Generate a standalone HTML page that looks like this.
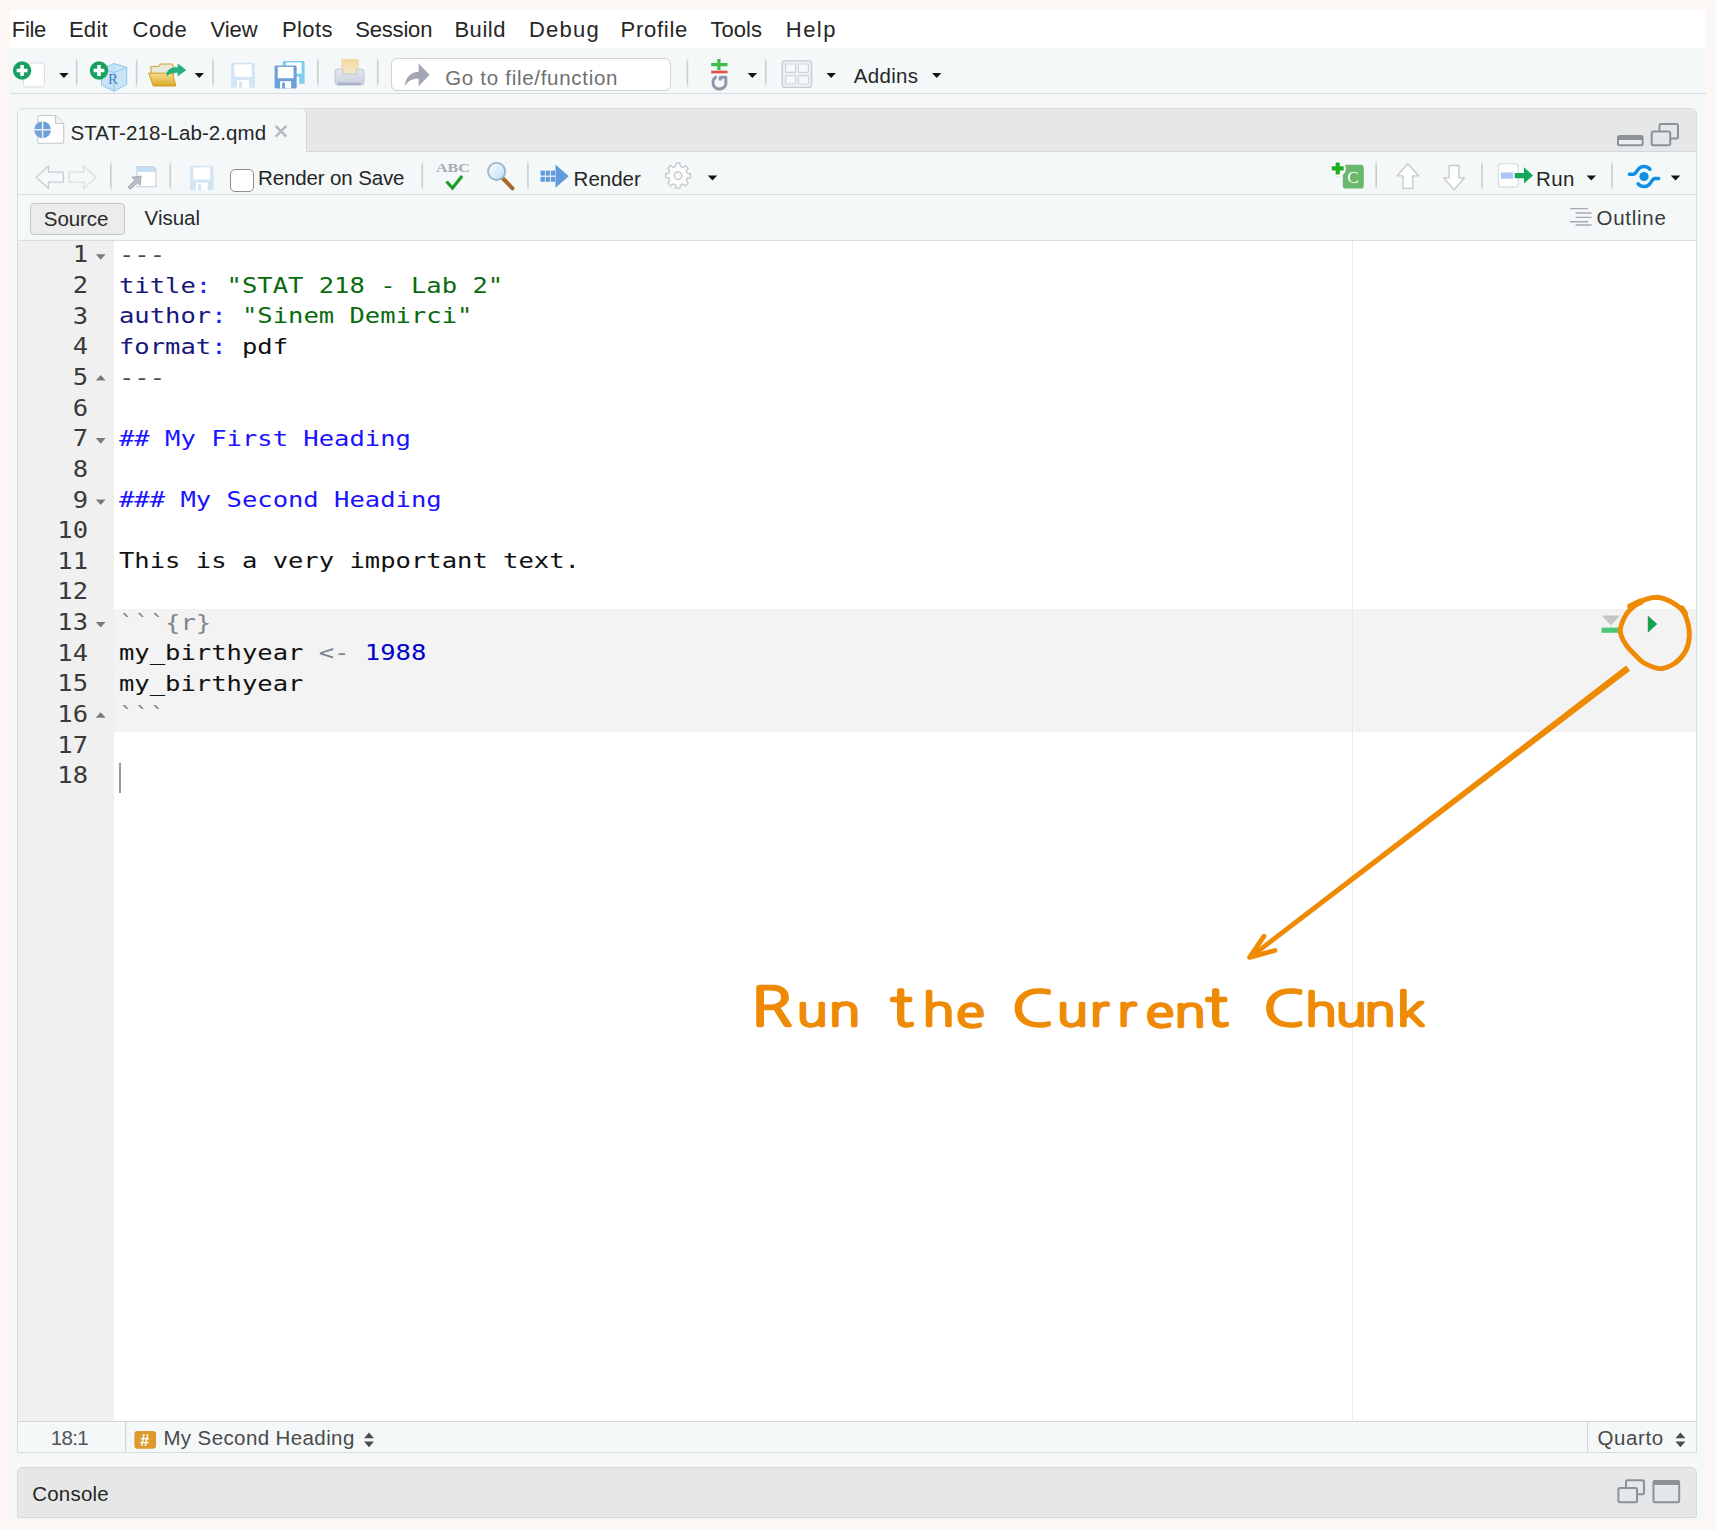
<!DOCTYPE html>
<html lang="en"><head><meta charset="utf-8"><title>RStudio - Run the Current Chunk</title>
<style>
html,body{margin:0;padding:0}
body{width:1716px;height:1530px;background:#fcf7f4;overflow:hidden;position:relative;font-family:"Liberation Sans",sans-serif}
#app{position:absolute;left:10px;top:10px;width:1696px;height:1511px;background:#f5f7f9;overflow:hidden}
#app *{box-sizing:border-box}
#app>*,.panel>*,.editor>*{position:absolute}
.menubar{left:0;top:0;width:1696px;height:38px;background:#fff}
.toolbar{left:0;top:38px;width:1696px;height:46px;background:#f4f8f9;border-bottom:1.5px solid #d8dcdf}
.searchbox{left:381px;top:48px;width:280px;height:33px;background:#fff;border:1px solid #cfd3d6;border-radius:6px}
.panel{left:7px;top:98px;width:1680px;height:1345px;background:#f4f8f9;border:1px solid #d7dbde;border-radius:6px 6px 0 0;overflow:hidden}
.tabstrip{left:0;top:0;width:1680px;height:43px;background:#e6e7e8;border-bottom:1px solid #d3d7da}
.tab{left:0;top:0;width:289px;height:44px;background:#f4f8f9;border-right:1px solid #d3d7da;border-radius:0 5px 0 0}
.edtb{left:0;top:43px;width:1680px;height:43px;background:#f4f8f9;border-bottom:1px solid #d9dde0}
.modebar{left:0;top:86px;width:1680px;height:46px;background:#f4f8f9;border-bottom:1px solid #d9dde0}
.srcbtn{left:12px;top:94px;width:95px;height:32px;background:#ececec;border:1px solid #c4c6c8;border-radius:4px}
.editor{left:0;top:132px;width:1680px;height:1180px;background:#fff;overflow:hidden}
.gutter{left:0;top:0;width:96px;height:1180px;background:#f0f0f0}
.chunkbg{left:96px;top:368.2px;width:1584px;height:122.6px;background:#f3f3f3}
.margin{left:1334.3px;top:0;width:1.2px;height:1180px;background:#ebebeb}
.cursor{left:101px;top:522px;width:1.6px;height:30px;background:#9a9a9a}
.status{left:0;top:1312px;width:1680px;height:32px;background:#f4f8f9;border-top:1px solid #d3d7da}
.console{left:7px;top:1457px;width:1680px;height:50.5px;background:#e6e7e8;border:1px solid #d5d9dc;border-radius:6px 6px 2px 2px}
.chk{left:219.5px;top:158.5px;width:24px;height:23.5px;background:#fff;border:1.5px solid #8c8c8c;border-radius:5px}
#code{left:0;top:0;width:1696px;height:1510px;font-family:"DejaVu Sans Mono","Liberation Mono",monospace;font-size:22px;line-height:30.65px;color:#111;white-space:pre}
#code>div{position:absolute;margin-top:-11.5px;height:30.65px}
#code>div.ln{margin-top:-12.1px}
#code .cl{left:109.4px;transform:scaleX(1.16);transform-origin:0 0}
#code .ln{left:8px;width:70px;text-align:right;color:#3a3a3a;font-size:23.5px;transform:scaleX(1.086);transform-origin:100% 0}
.tag{color:#17177a}.col{color:#1a1aff}.str{color:#0a6a0f}.hd{color:#1b12ff}.num{color:#0000cd}.op{color:#7a8694}.ck{color:#7d8590}.mk{color:#4a4a4a}
.t{position:absolute;line-height:0;white-space:pre;margin-left:-10px;margin-top:-10px}
#ov{position:absolute;left:0;top:0;width:1716px;height:1530px;pointer-events:none}

</style></head>
<body>
<div id="app">
<div class="menubar"></div>
<div class="toolbar"></div>
<div class="searchbox"></div>
<div class="panel">
  <div class="tabstrip"></div>
  <div class="tab"></div>
  <div class="edtb"></div>
  <div class="modebar"></div>
  <div class="srcbtn"></div>
  <div class="editor">
    <div class="gutter"></div>
    <div class="chunkbg"></div>
    <div class="margin"></div>
    <div class="cursor"></div>
  </div>
  <div class="status"></div>
</div>
<div class="console"></div>
<div class="chk"></div>
<div id="code">
<div class="ln" style="top:241.40px">1</div>
<div class="cl" style="top:241.40px"><span class="mk">---</span></div>
<div class="ln" style="top:272.05px">2</div>
<div class="cl" style="top:272.05px"><span class="tag">title</span><span class="col">:</span> <span class="str">"STAT 218 - Lab 2"</span></div>
<div class="ln" style="top:302.70px">3</div>
<div class="cl" style="top:302.70px"><span class="tag">author</span><span class="col">:</span> <span class="str">"Sinem Demirci"</span></div>
<div class="ln" style="top:333.35px">4</div>
<div class="cl" style="top:333.35px"><span class="tag">format</span><span class="col">:</span> pdf</div>
<div class="ln" style="top:364.00px">5</div>
<div class="cl" style="top:364.00px"><span class="mk">---</span></div>
<div class="ln" style="top:394.65px">6</div>
<div class="ln" style="top:425.30px">7</div>
<div class="cl" style="top:425.30px"><span class="hd">## My First Heading</span></div>
<div class="ln" style="top:455.95px">8</div>
<div class="ln" style="top:486.60px">9</div>
<div class="cl" style="top:486.60px"><span class="hd">### My Second Heading</span></div>
<div class="ln" style="top:517.25px">10</div>
<div class="ln" style="top:547.90px">11</div>
<div class="cl" style="top:547.90px">This is a very important text.</div>
<div class="ln" style="top:578.55px">12</div>
<div class="ln" style="top:609.20px">13</div>
<div class="cl" style="top:609.20px"><span class="ck">```{r}</span></div>
<div class="ln" style="top:639.85px">14</div>
<div class="cl" style="top:639.85px">my_birthyear <span class="op">&lt;-</span> <span class="num">1988</span></div>
<div class="ln" style="top:670.50px">15</div>
<div class="cl" style="top:670.50px">my_birthyear</div>
<div class="ln" style="top:701.15px">16</div>
<div class="cl" style="top:701.15px"><span class="ck">```</span></div>
<div class="ln" style="top:731.80px">17</div>
<div class="ln" style="top:762.45px">18</div>
</div>
<span class="t" style="left:11.8px;top:30.4px;font-size:22px;color:#262626;letter-spacing:-0.300px;">File</span>
<span class="t" style="left:68.9px;top:30.4px;font-size:22px;color:#262626;letter-spacing:0.300px;">Edit</span>
<span class="t" style="left:132.6px;top:30.4px;font-size:22px;color:#262626;letter-spacing:0.533px;">Code</span>
<span class="t" style="left:210.5px;top:30.4px;font-size:22px;color:#262626;letter-spacing:-0.033px;">View</span>
<span class="t" style="left:282.0px;top:30.4px;font-size:22px;color:#262626;letter-spacing:0.400px;">Plots</span>
<span class="t" style="left:355.3px;top:30.4px;font-size:22px;color:#262626;letter-spacing:-0.200px;">Session</span>
<span class="t" style="left:454.4px;top:30.4px;font-size:22px;color:#262626;letter-spacing:0.550px;">Build</span>
<span class="t" style="left:528.9px;top:30.4px;font-size:22px;color:#262626;letter-spacing:1.275px;">Debug</span>
<span class="t" style="left:620.6px;top:30.4px;font-size:22px;color:#262626;letter-spacing:0.717px;">Profile</span>
<span class="t" style="left:710.6px;top:30.4px;font-size:22px;color:#262626;letter-spacing:0.000px;">Tools</span>
<span class="t" style="left:785.8px;top:30.4px;font-size:22px;color:#262626;letter-spacing:1.467px;">Help</span>
<span class="t" style="left:445.2px;top:78.1px;font-size:20.5px;color:#6f6f6f;letter-spacing:0.706px;">Go to file/function</span>
<span class="t" style="left:853.8px;top:75.9px;font-size:20.5px;color:#262626;letter-spacing:0.320px;">Addins</span>
<span class="t" style="left:70.5px;top:132.7px;font-size:20.5px;color:#262626;letter-spacing:0.094px;">STAT-218-Lab-2.qmd</span>
<span class="t" style="left:258.1px;top:177.5px;font-size:20.5px;color:#262626;letter-spacing:-0.138px;">Render on Save</span>
<span class="t" style="left:573.6px;top:179.2px;font-size:20.5px;color:#262626;letter-spacing:-0.020px;">Render</span>
<span class="t" style="left:1536.1px;top:178.9px;font-size:20.5px;color:#262626;letter-spacing:0.350px;">Run</span>
<span class="t" style="left:43.8px;top:218.9px;font-size:20.5px;color:#2a2a2a;letter-spacing:-0.080px;">Source</span>
<span class="t" style="left:144.6px;top:217.9px;font-size:20.5px;color:#2a2a2a;letter-spacing:-0.020px;">Visual</span>
<span class="t" style="left:1596.5px;top:217.5px;font-size:20.5px;color:#3a3a3a;letter-spacing:0.733px;">Outline</span>
<span class="t" style="left:50.8px;top:1438.2px;font-size:20.5px;color:#555;letter-spacing:-0.667px;">18:1</span>
<span class="t" style="left:163.4px;top:1438.2px;font-size:20.5px;color:#4a4a4a;letter-spacing:0.394px;">My Second Heading</span>
<span class="t" style="left:1597.4px;top:1438.2px;font-size:20.5px;color:#4a4a4a;letter-spacing:0.620px;">Quarto</span>
<span class="t" style="left:32.3px;top:1493.6px;font-size:20.5px;color:#262626;letter-spacing:0.183px;">Console</span>
</div>
<svg id="ov" width="1716" height="1530" viewBox="0 0 1716 1530">
<defs>
  <linearGradient id="gFold" x1="0" y1="0" x2="0" y2="1"><stop offset="0" stop-color="#f8e08e"/><stop offset="1" stop-color="#dba724"/></linearGradient>
  <linearGradient id="gPaper" x1="0" y1="0" x2="0" y2="1"><stop offset="0" stop-color="#f1d9a4"/><stop offset="1" stop-color="#f7e9c6"/></linearGradient>
  <linearGradient id="gPrn" x1="0" y1="0" x2="0" y2="1"><stop offset="0" stop-color="#e3e7ef"/><stop offset="1" stop-color="#c9d0dd"/></linearGradient>
  <linearGradient id="gLens" x1="0" y1="0" x2="1" y2="1"><stop offset="0" stop-color="#ffffff"/><stop offset="1" stop-color="#b9dcf5"/></linearGradient>
  <g id="dd"><path d="M0 0h9.4l-4.7 5z" fill="#151515"/></g>
  <g id="plusc"><circle r="9.2" fill="#17a05e"/><path d="M-5.4 0h10.8M0 -5.4v10.8" stroke="#fff" stroke-width="3.6"/></g>
  <linearGradient id="gSep" x1="0" y1="0" x2="0" y2="1"><stop offset="0" stop-color="#c9cdd0" stop-opacity="0"/><stop offset=".18" stop-color="#c9cdd0"/><stop offset=".82" stop-color="#c9cdd0"/><stop offset="1" stop-color="#c9cdd0" stop-opacity="0"/></linearGradient>
  <g id="sep"><rect x="-0.800" y="-1" width="1.600" height="31" fill="url(#gSep)"/></g>
  <g id="floppy"><path d="M1.5 0h21a1.5 1.5 0 0 1 1.5 1.5v22a1.5 1.5 0 0 1-1.5 1.5h-21a1.5 1.5 0 0 1-1.5-1.5v-22a1.5 1.5 0 0 1 1.5-1.5z"/><rect x="3.4" y="1.6" width="17.2" height="12.4" fill="#fff"/><rect x="6" y="17.2" width="12" height="7.8" fill="#fff"/><rect x="8.2" y="18.6" width="3" height="6.4"/></g>
</defs>

<!-- ===== main toolbar ===== -->
<g id="ic-newfile">
  <rect x="23.6" y="63" width="20.8" height="24" rx="1.5" fill="#fff" stroke="#d5dce6" stroke-width="1"/>
  <use href="#plusc" x="22.1" y="70.5"/>
</g>
<use href="#dd" x="59.2" y="72.9"/>
<use href="#sep" x="76.6" y="58"/>
<g id="ic-newproj">
  <path d="M101.500 69.500l12.500-6 12.700 3.800v17.200l-12.700 6.700-12.500-6z" fill="#c9e5f5" stroke="#8fc8e8" stroke-width="1"/>
  <path d="M114 72.500v18.700M101.500 69.500l12.500 3 12.700-5.200" fill="none" stroke="#8fc8e8" stroke-width="1" opacity=".9"/>
  <path d="M114 63.500v9" fill="none" stroke="#a9d5ee" stroke-width="1" opacity=".7"/>
  <text x="108" y="83.500" font-family="Liberation Serif, serif" font-size="15" fill="#4a7fcc">R</text>
  <use href="#plusc" x="99" y="70.500"/>
</g>
<use href="#sep" x="136.600" y="58"/>
<g id="ic-open">
  <path d="M151 66.500h7.500l2-2.500h11.500l1.500 2.500v8h-22.500z" fill="#e9e6dc" stroke="#d2a82d" stroke-width="1.2"/>
  <path d="M148.700 73.200h23.800l3.400 12.800h-22.700z" fill="url(#gFold)" stroke="#cf9d1d" stroke-width="1"/>
  <path d="M166.500 73c2.200-4.600 6-6 11.200-5.800v-3.800l8.600 6.600-8.600 6.600v-3.800c-4.600-.4-7.800.4-11.200 3.800z" fill="#21b07f"/>
</g>
<use href="#dd" x="194.600" y="72.900"/>
<use href="#sep" x="213" y="58"/>
<use href="#floppy" x="231" y="62.800" fill="#d3e5f4"/>
<use href="#floppy" x="0" y="0" transform="translate(282.800 61) scale(.91)" fill="#7ccdf0"/>
<use href="#floppy" x="0" y="0" transform="translate(274.600 65.400) scale(.92)" fill="#6d9fd8"/>
<use href="#sep" x="317.800" y="58"/>
<g id="ic-print">
  <rect x="341.600" y="59.200" width="16.600" height="14" fill="url(#gPaper)" stroke="#ecd7a8" stroke-width=".6"/>
  <path d="M338 69h5v5h13.500v-5h4.500a3 3 0 0 1 3 3v10a3 3 0 0 1-3 3h-23a3 3 0 0 1-3-3v-10a3 3 0 0 1 3-3z" fill="url(#gPrn)" stroke="#b7bfd0" stroke-width=".8"/>
  <rect x="338" y="82.600" width="23" height="2.600" fill="#a9b2c6"/>
</g>
<use href="#sep" x="377.700" y="58"/>
<path id="ic-goto" d="M404.500 86.500c1-9.500 6.500-14.500 14.200-14.800v-8.200l10.800 11.300-10.800 11.400v-7.400c-6.300-.3-10.600 2-14.200 7.700z" fill="#a2a6b6"/>
<use href="#sep" x="687.400" y="58"/>
<g id="ic-git">
  <path d="M711.200 64.600h16.300M718.900 59v11" stroke="#3dbb4c" stroke-width="3.300" fill="none"/>
  <path d="M711.200 72h16.300" stroke="#de5148" stroke-width="2.700"/>
  <path d="M716.600 76.700A6.500 6.500 0 1 0 725.800 81.200V77.300H720.300V80.600" fill="none" stroke="#8b9aad" stroke-width="3.100" stroke-linejoin="round"/>
</g>
<use href="#dd" x="747.700" y="72.900"/>
<use href="#sep" x="765.700" y="58"/>
<g id="ic-grid">
  <rect x="782.200" y="60.800" width="29.400" height="26.600" rx="3" fill="#eef0f3" stroke="#c5cad3" stroke-width="1.3"/>
  <rect x="785.600" y="64" width="10" height="8.400" rx="1" fill="#f7f8fa" stroke="#cfd4db" stroke-width="1.2"/>
  <rect x="798.400" y="64" width="10" height="8.400" rx="1" fill="#f7f8fa" stroke="#cfd4db" stroke-width="1.2"/>
  <rect x="785.600" y="75.600" width="10" height="8.400" rx="1" fill="#f7f8fa" stroke="#cfd4db" stroke-width="1.2"/>
  <rect x="798.400" y="75.600" width="10" height="8.400" rx="1" fill="#f7f8fa" stroke="#cfd4db" stroke-width="1.2"/>
</g>
<use href="#dd" x="826.500" y="72.900"/>
<use href="#dd" x="932" y="72.900"/>

<!-- ===== tab ===== -->
<g id="ic-qmd">
  <path d="M39 115.500h16.500l8.200 8v18.500a1.200 1.200 0 0 1-1.200 1.200h-23.500a1.200 1.200 0 0 1-1.200-1.200v-25.300a1.200 1.200 0 0 1 1.200-1.200z" fill="#fff" stroke="#c4c8cc" stroke-width="1.100"/>
  <path d="M55.500 115.500v8h8.200" fill="#f1f3f5" stroke="#c4c8cc" stroke-width="1.100"/>
  <circle cx="42.600" cy="129.800" r="8.400" fill="#6f9fd8"/>
  <path d="M34.200 129.800h16.800M42.600 121.400v16.800" stroke="#e9f1fa" stroke-width="1.500"/>
</g>
<path d="M275.600 125.800l10.800 10.800M286.400 125.800l-10.800 10.800" stroke="#b9bcbf" stroke-width="2.600" fill="none"/>
<!-- min / max pane -->
<g id="ic-min"><rect x="1618" y="136" width="24.600" height="9.200" rx="1.500" fill="#eceeef" stroke="#8c9396" stroke-width="2"/><rect x="1618" y="136" width="24.600" height="4" fill="#8c9396"/></g>
<g id="ic-rest">
  <rect x="1659.500" y="124" width="18.500" height="14.500" rx="1.500" fill="#e6e7e8" stroke="#8c9396" stroke-width="2"/>
  <rect x="1651.700" y="131.500" width="18.500" height="13.700" rx="1.500" fill="#e6e7e8" stroke="#8c9396" stroke-width="2"/>
</g>

<!-- ===== editor toolbar ===== -->
<g id="ic-back" fill="#f7f8f9" stroke="#c9ccd0" stroke-width="1.300" stroke-linejoin="round">
  <path d="M36.200 177.200l12.300-11.300v6.300h14.800v10h-14.800v6.300z"/>
  <path d="M96 177.200l-12.300-11.300v6.300h-14.500v10h14.500v6.300z" stroke="#dcdfe2"/>
</g>
<use href="#sep" x="110.800" y="161" />
<g id="ic-popout">
  <path d="M137 166.500h15a4 4 0 0 1 4 4v16.200h-19z" fill="#fff" stroke="#c9ced6" stroke-width="1.100"/>
  <path d="M137 166.500h15a4 4 0 0 1 4 4v1.500h-19z" fill="#c5def3"/>
  <path d="M128 187l7-7-3.200-2.800 9.400-1.200-1 9.400-2.800-3-7 7z" fill="#b9bfc9" stroke="#9aa1ad" stroke-width=".8"/>
</g>
<use href="#sep" x="170.300" y="161"/>
<use href="#floppy" x="0" y="0" transform="translate(190 165.800) scale(.98)" fill="#d3e5f4"/>
<use href="#sep" x="422.300" y="161"/>
<g id="ic-spell">
  <text x="436" y="172.200" font-family="Liberation Serif, serif" font-weight="bold" font-size="13.500" fill="#a9adb3" textLength="34" lengthAdjust="spacingAndGlyphs">ABC</text>
  <path d="M446.500 181.500l6 6.500 9.600-12" fill="none" stroke="#1d9d2c" stroke-width="3.200" stroke-linejoin="miter"/>
</g>
<g id="ic-find">
  <path d="M503 178.500l9.500 9.800" stroke="#a8682e" stroke-width="4" stroke-linecap="round"/>
  <circle cx="496.600" cy="171.400" r="8.600" fill="url(#gLens)" stroke="#9fb4c8" stroke-width="1.800"/>
</g>
<use href="#sep" x="527.900" y="161"/>
<g id="ic-render" fill="#5f9bd9">
  <path d="M555.500 164.600l13.200 11.600-13.200 11.600z"/>
  <rect x="540.600" y="170.600" width="4.200" height="5"/><rect x="545.700" y="170.600" width="4.200" height="5"/><rect x="550.800" y="170.600" width="4.200" height="5"/>
  <rect x="540.600" y="176.800" width="4.200" height="5"/><rect x="545.700" y="176.800" width="4.200" height="5"/><rect x="550.800" y="176.800" width="4.200" height="5"/>
</g>
<g id="ic-gear">
  <path d="M675.69 166.38L676.03 163.26L679.97 163.26L680.31 166.38L682.95 167.48L685.41 165.51L688.19 168.29L686.22 170.75L687.32 173.39L690.44 173.73L690.44 177.67L687.32 178.01L686.22 180.65L688.19 183.11L685.41 185.89L682.95 183.92L680.31 185.02L679.97 188.14L676.03 188.14L675.69 185.02L673.05 183.92L670.59 185.89L667.81 183.11L669.78 180.65L668.68 178.01L665.56 177.67L665.56 173.73L668.68 173.39L669.78 170.75L667.81 168.29L670.59 165.51L673.05 167.48Z" fill="#fdfdfd" stroke="#c3c7cb" stroke-width="1.300" stroke-linejoin="round"/>
  <circle cx="678" cy="175.700" r="3.800" fill="#f4f8f9" stroke="#c3c7cb" stroke-width="1.300"/>
</g>
<use href="#dd" x="707.800" y="175.600"/>

<g id="ic-chunk">
  <rect x="1342.800" y="164.800" width="21" height="23.800" rx="3.200" fill="#6ab86c"/>
  <text x="1347.300" y="183.200" font-family="Liberation Serif, serif" font-size="17" fill="#fff">C</text>
  <circle cx="1337.800" cy="168.900" r="8.300" fill="#d9dcde" opacity=".6"/>
  <circle cx="1337.700" cy="168.400" r="7.900" fill="#fff"/>
  <path d="M1331.700 168.400h12M1337.700 162.400v12" stroke="#1fb022" stroke-width="4.200"/>
</g>
<use href="#sep" x="1376.200" y="161"/>
<path d="M1407.800 163.800l10.800 12h-5.800v12.600h-9.800v-12.600h-5.800z" fill="#fff" stroke="#c6c9cc" stroke-width="1.300" stroke-linejoin="round"/>
<path d="M1454 189.800l10.600-12h-5.700v-12.300h-9.800v12.300h-5.700z" fill="#fff" stroke="#c6c9cc" stroke-width="1.300" stroke-linejoin="round"/>
<use href="#sep" x="1482" y="161"/>
<g id="ic-run">
  <rect x="1498.400" y="163.800" width="19.800" height="23.300" rx="3" fill="#fff" stroke="#d6dbe0" stroke-width="1.100"/>
  <rect x="1500.800" y="172.500" width="12.300" height="6.200" fill="#a9c6f4"/>
  <path d="M1514.700 173h9.300v-5.800l9 8.200-9 8.200v-5.300h-9.300z" fill="#13a85a"/>
</g>
<use href="#dd" x="1586.600" y="175.400"/>
<use href="#sep" x="1612.100" y="161"/>
<g id="ic-publish" fill="none" stroke="#0e90e4" stroke-width="3.500" stroke-linecap="round">
  <path d="M1629.400 174.200H1633.300C1637.200 174.200 1636.600 166.600 1643.600 166.400C1646.600 166.300 1648.800 167.500 1650 169.200"/>
  <path d="M1658.700 178.400H1654.900C1651 178.400 1651.600 186.200 1644.600 186.500C1641.600 186.600 1639.300 185.500 1638 183.800"/>
  <circle cx="1644" cy="176.500" r="4.600" fill="#0e90e4" stroke="none"/>
</g>
<use href="#dd" x="1670.800" y="175.400"/>

<!-- outline icon -->
<g stroke="#a6abb0" stroke-width="1.400">
  <path d="M1570 208.600h18M1575.600 213h16M1575.600 217.400h16M1570 221.800h18M1575.600 225h16"/>
</g>

<!-- fold markers -->
<g id="folds" fill="#777b7f">
<path d="M95.800 254.2h9.800l-4.900 5.600z"/>
<path d="M95.800 380.6h9.800l-4.900 -5.600z"/>
<path d="M95.800 438.1h9.800l-4.900 5.600z"/>
<path d="M95.800 499.4h9.800l-4.900 5.600z"/>
<path d="M95.800 622.0h9.800l-4.900 5.600z"/>
<path d="M95.800 717.8h9.800l-4.900 -5.600z"/>
</g>

<!-- status bar -->
<rect x="125" y="1422" width="1.200" height="30" fill="#d3d7da"/>
<rect x="1587" y="1422" width="1.200" height="30" fill="#d3d7da"/>
<g id="ic-hash">
  <rect x="134.400" y="1431" width="21.600" height="17.800" rx="3" fill="#dc9a2c"/>
  <text x="140.300" y="1445.800" font-family="Liberation Sans, sans-serif" font-weight="bold" font-size="16" fill="#fff">#</text>
</g>
<path d="M364 1438.200l5-5.600 5 5.600zM364 1441.600l5 5.600 5-5.600z" fill="#4d4d4d"/>
<path d="M1675.400 1438.200l5-5.600 5 5.600zM1675.400 1441.600l5 5.600 5-5.600z" fill="#4d4d4d"/>

<!-- console pane icons -->
<g>
  <rect x="1626" y="1480.200" width="18" height="14" rx="1.500" fill="#e6e7e8" stroke="#8c9396" stroke-width="2"/>
  <rect x="1618.400" y="1488" width="18.600" height="14.300" rx="1.500" fill="#e6e7e8" stroke="#8c9396" stroke-width="2"/>
  <rect x="1653.500" y="1481" width="25.700" height="21.300" rx="1.500" fill="#e6e7e8" stroke="#8c9396" stroke-width="2"/>
  <rect x="1653.500" y="1480.400" width="25.700" height="4.600" fill="#8c9396"/>
</g>

<!-- chunk toolbar icons -->
<g id="ic-chunkrun">
  <path d="M1601.600 615.600h18.600l-9.300 9.600z" fill="#c3c6c9"/>
  <rect x="1601.600" y="627.600" width="18.600" height="5.200" fill="#4fc77a"/>
  <path d="M1647.800 615.400l9.400 8.700-9.400 8.700z" fill="#17a04e"/>
</g>

<!-- ===== annotation ===== -->
<g id="anno" fill="none" stroke="#ee8a04" stroke-linecap="round" stroke-linejoin="round">
  <path d="M1631 607.500C1640 600.500 1650 597.300 1657.500 597.300C1668 598.500 1677 605 1683.500 610.800C1688 621 1690 630 1689.300 637C1688.500 650 1681.500 658.500 1674.500 663.500C1668 667.500 1663 669 1658.500 668.600C1650 666.500 1644.500 664 1640 660C1633 652.500 1628 648.500 1625.500 644C1621.500 638 1620 634 1620.300 629.500C1621.500 622 1623.500 618.500 1626.500 614C1630 609 1634.500 605.500 1640.500 601" stroke-width="4.900"/>
  <path d="M1630.500 606.500L1640.500 601.800" stroke-width="6.500"/>
  <path d="M1681.800 608.500L1685 613.500" stroke-width="6"/>
  <path d="M1629.300 670.500L1626.100 666.300L1250 955.200L1252 957.900Z" fill="#ee8a04" stroke-width="1.200"/>
  <path d="M1264 936.200L1249.600 957.400L1274.900 950.500" stroke-width="4.800"/>
</g>
<g id="anno-text" transform="scale(1.25 1)" font-family="NanumGothic, 'Liberation Sans', sans-serif" font-size="42" fill="#ee8a04" stroke="#ee8a04" stroke-width="2.3" stroke-linejoin="round" stroke-linecap="round">
  <text y="1026.0"><tspan x="600.6" font-size="54">R</tspan><tspan x="637.1">u</tspan><tspan x="663.1">n</tspan></text>
  <text y="1026.0"><tspan x="711.7" font-size="52" y="1026.5">t</tspan><tspan x="737.9" font-size="43">h</tspan><tspan x="765.1" y="1027.5">e</tspan></text>
  <text y="1026.0"><tspan x="809.5" font-size="49">C</tspan><tspan x="845.2">u</tspan><tspan x="871.6">r</tspan><tspan x="893.7">r</tspan><tspan x="916.7" y="1027.5">e</tspan><tspan x="939.5">n</tspan><tspan x="963.7" font-size="52" y="1026.5">t</tspan></text>
  <text y="1026.0"><tspan x="1010.6" font-size="49">C</tspan><tspan x="1043.8" font-size="43">h</tspan><tspan x="1068.2">u</tspan><tspan x="1091.4">n</tspan><tspan x="1117.0" font-size="45">k</tspan></text>
</g>
<!--NEXT-->

</svg>

</body></html>
